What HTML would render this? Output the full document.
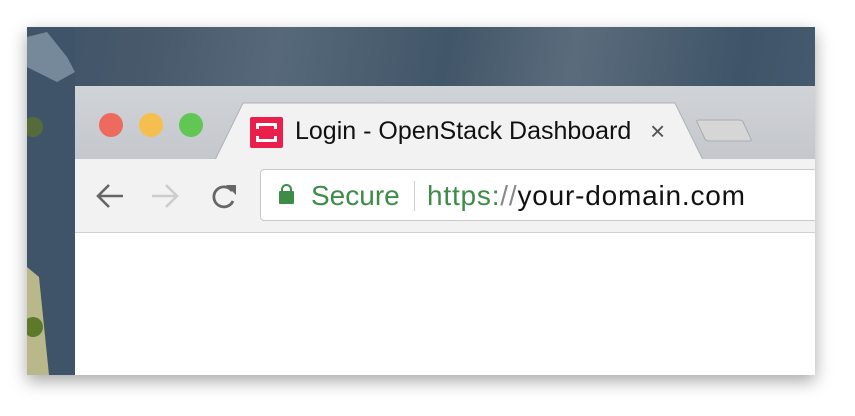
<!DOCTYPE html>
<html><head><style>
*{margin:0;padding:0;box-sizing:border-box}
body{width:855px;height:416px;background:#fff;position:relative;overflow:hidden;font-family:"Liberation Sans",sans-serif}
#frame{position:absolute;left:27px;top:27px;width:788px;height:348px;overflow:hidden;box-shadow:0 6px 16px rgba(0,0,0,.35);
background:linear-gradient(100deg,#3e5468 0%,#48596b 15%,#56697a 30%,#425669 50%,#5a6c7c 65%,#3f5468 85%,#4a5e72 100%)}
#win{position:absolute;left:48px;top:59px;width:760px;height:300px;background:#fff}
#tabbar{position:absolute;left:0;top:0;width:100%;height:73px;background:linear-gradient(#d0d3d7,#c4c7cc)}
.dot{position:absolute;top:27px;width:24px;height:24px;border-radius:50%}
#toolbar{position:absolute;left:0;top:73px;width:100%;height:74px;background:#f2f2f2;border-bottom:1px solid #d2d2d2}
#addr{position:absolute;left:185px;top:10px;width:600px;height:52px;background:#fff;border:1px solid #c9c9c9;border-radius:4px}
</style></head><body>
<div id="frame">
<svg style="position:absolute;left:0;top:0" width="48" height="348">
<rect width="48" height="348" fill="#3f5468"/>
<path d="M0 10 L20 5 L40 30 L48 45 L30 55 L0 40Z" fill="#8ea0b0" opacity=".7"/>
<path d="M0 240 L12 250 L22 348 L0 348Z" fill="#b8b88a"/>
<circle cx="6" cy="300" r="10" fill="#5c7a2a"/>
<circle cx="6" cy="100" r="10" fill="#5c7030" opacity=".8"/>
</svg>
<div id="win">
<div id="tabbar">
<div class="dot" style="left:24px;background:#ee6a5e"></div>
<div class="dot" style="left:64px;background:#f5bf4f"></div>
<div class="dot" style="left:104px;background:#62c654"></div>
<svg style="position:absolute;left:140px;top:15px" width="620" height="60">
<path d="M0 59 L28 2 L460 2 L488 59Z" fill="#f2f2f2" stroke="#aeb1b5"/>
<path d="M482 21 Q481 19 484 19 L524 19 Q527 19 528 21 L536 38 Q537 40 534 40 L494 40 Q491 40 490 38Z" fill="#d6d6d6" stroke="#a9acb0"/>
</svg>
<div style="position:absolute;left:175px;top:31px;width:33px;height:31px;background:#ea1f4b;border-radius:2px">
<div style="position:absolute;left:6px;top:6px;width:21px;height:19px;border:3px solid #fff"></div>
<div style="position:absolute;left:0;top:12px;width:33px;height:7px;background:#ea1f4b"></div>
</div>
<div style="position:absolute;left:220px;top:31px;font-size:25px;color:#111">Login - OpenStack Dashboard</div>
<div style="position:absolute;left:575px;top:30px;font-size:26px;color:#555">×</div>
</div>
<div id="toolbar">
<svg style="position:absolute;left:20px;top:22px" width="150" height="30">
<g fill="none" stroke="#666" stroke-width="2.6"><path d="M3 15 H28 M14 4 L3 15 L14 26"/></g>
<g fill="none" stroke="#ccc" stroke-width="2.6"><path d="M57 15 H82 M71 4 L82 15 L71 26"/></g>
<g fill="none" stroke="#666" stroke-width="2.8"><path d="M137 10 A10 10 0 1 0 138 20"/></g>
<path d="M131 4 L141 4 L141 14Z" fill="#666"/>
</svg>
<div id="addr">
<div style="position:absolute;left:18px;top:21px;width:15px;height:13px;background:#3d8c47;border-radius:1px"></div>
<div style="position:absolute;left:20px;top:14px;width:11px;height:10px;border:2.5px solid #3d8c47;border-radius:6px 6px 0 0;border-bottom:none"></div>
<div style="position:absolute;left:50px;top:10px;font-size:28px;color:#3d8c47">Secure</div>
<div style="position:absolute;left:153px;top:11px;width:1px;height:30px;background:#ccc"></div>
<div style="position:absolute;left:166px;top:10px;font-size:28px;letter-spacing:0.8px;color:#111"><span style="color:#3d8c47">https:</span><span style="color:#888">//</span>your-domain.com</div>
</div>
</div>
</div>
</div>
</body></html>
